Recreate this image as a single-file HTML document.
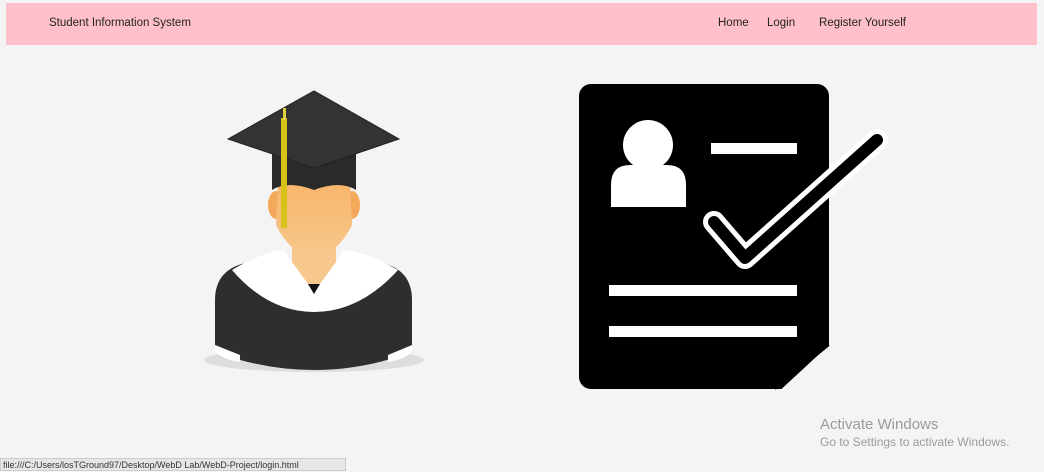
<!DOCTYPE html>
<html><head><style>
body{margin:0;width:1044px;height:471px;background:#f4f4f4;font-family:"Liberation Sans",sans-serif;position:relative;overflow:hidden}
.nav{position:absolute;left:6px;top:3px;width:1031px;height:42px;background:#ffc0cb;font-size:11.5px;color:#222}
.nav span{position:absolute;top:14px}
.status{position:absolute;left:0;top:458px;width:346px;height:13px;background:#e6e6e6;border:1px solid #ccc;font-size:9px;color:#333;line-height:13px;padding-left:2px;box-sizing:border-box}
.act{position:absolute;left:820px;color:#9a9a9a}
</style></head><body>
<div class="nav"><span style="left:43px">Student Information System</span><span style="left:712px">Home</span><span style="left:761px">Login</span><span style="left:813px">Register Yourself</span></div>
<svg width="1044" height="471" style="position:absolute;left:0;top:0">
<defs><linearGradient id="sk" x1="0" y1="0" x2="0" y2="1"><stop offset="0" stop-color="#f8b56a"/><stop offset="1" stop-color="#f6c88e"/></linearGradient></defs>
<ellipse cx="314" cy="360" rx="110" ry="12" fill="#ddd"/>
<path d="M215 300 Q215 268 250 262 L378 262 Q412 268 412 300 L412 352 Q314 388 215 352Z" fill="#2e2e2e"/>
<path d="M215 345 L240 355 L240 362 Q225 360 215 352Z M412 345 L388 355 L388 362 Q403 360 412 352Z" fill="#fff"/>
<rect x="292" y="235" width="44" height="50" fill="#f6c88e"/>
<path d="M232 270 Q262 252 284 250 L292 262 L314 292 L336 262 L344 250 Q366 252 398 270 Q360 312 314 312 Q268 312 232 270Z" fill="#fff"/>
<path d="M308 284 L314 294 L320 284Z" fill="#111"/>
<ellipse cx="276" cy="205" rx="8" ry="14" fill="#f4a85a"/>
<ellipse cx="352" cy="205" rx="8" ry="14" fill="#f4a85a"/>
<path d="M278 180 L350 180 L352 225 Q340 250 314 262 Q288 250 276 225Z" fill="url(#sk)"/>
<path d="M272 150 Q314 135 356 150 L356 190 Q340 180 314 190 Q288 180 272 190Z" fill="#2a2a2a"/>
<path d="M228 139 L314 91 L399 139 L314 168Z" fill="#333" stroke="#222"/>
<rect x="281" y="118" width="6" height="110" fill="#d7c21a"/>
<rect x="283" y="108" width="3" height="12" fill="#e0d040"/>
<rect x="579" y="84" width="250" height="305" rx="12" fill="#000"/>
<path d="M829 345 L829 395 L775 395Z" fill="#f4f4f4"/>
<path d="M775 389 L829 345" stroke="#000" stroke-width="2"/>
<circle cx="648" cy="145" r="25" fill="#fff"/>
<path d="M611 207 L611 185 Q611 165 630 165 L667 165 Q686 165 686 185 L686 207Z" fill="#fff"/>
<rect x="711" y="143" width="86" height="11" fill="#fff"/>
<rect x="609" y="285" width="188" height="11" fill="#fff"/>
<rect x="609" y="326" width="188" height="11" fill="#fff"/>
<path d="M714 222 L745 258 L877 140" fill="none" stroke="#fff" stroke-width="22" stroke-linejoin="round" stroke-linecap="round"/>
<path d="M714 222 L745 258 L877 140" fill="none" stroke="#000" stroke-width="12" stroke-linejoin="round" stroke-linecap="round"/>
</svg>
<div class="act" style="top:416px;font-size:15px">Activate Windows</div>
<div class="act" style="top:435px;font-size:12px">Go to Settings to activate Windows.</div>
<div class="status">file:///C:/Users/losTGround97/Desktop/WebD Lab/WebD-Project/login.html</div>
</body></html>
